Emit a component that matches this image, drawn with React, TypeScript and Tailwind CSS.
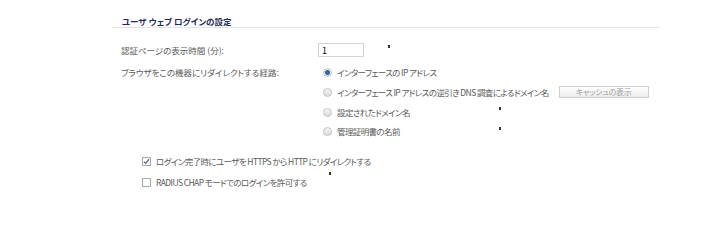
import React from 'react';

const Radio: React.FC<{ checked?: boolean }> = ({ checked }) => (
    <span className="flex items-center justify-center w-[9px] h-[9px] rounded-full border border-[#c4c4c4] bg-gradient-to-b from-[#f4f4f4] to-[#dcdcdc] shrink-0">
        {checked && <span className="w-[5px] h-[5px] rounded-full bg-[#2f6db5] border border-[#1d4f8c]" />}
    </span>
);

const Checkbox: React.FC<{ checked?: boolean }> = ({ checked }) => (
    <span className="flex items-center justify-center w-[9px] h-[9px] border border-[#a9a9a9] bg-white shrink-0">
        {checked && (
            <svg viewBox="0 0 8 8" className="w-[7px] h-[7px]">
                <path d="M1 4.2 L3 6.2 L7 1.2" fill="none" stroke="#4a5a8a" strokeWidth="1.3" />
            </svg>
        )}
    </span>
);

// tiny dark marks that sit over the form
const Mark: React.FC<{ className: string }> = ({ className }) => (
    <span className={`absolute w-[2px] h-[3px] bg-[#333] ${className}`} />
);

const RadioOption: React.FC<{ checked?: boolean; label: string; children?: React.ReactNode; className?: string }> = ({ checked, label, children, className }) => (
    <div className={`flex items-center h-[14px] gap-[5px] ${className ?? ''}`}>
        <Radio checked={checked} />
        <span className="whitespace-nowrap tracking-[-0.6px]">{label}</span>
        {children}
    </div>
);

export default function App() {
    return (
        <div
            className="relative w-[707px] h-[212px] bg-white text-[8.5px] text-[#5a5a5a] overflow-hidden [font-feature-settings:'palt']"
            style={{ fontFamily: '"Noto Sans CJK JP", "Liberation Sans", sans-serif' }}
        >
            <div className="ml-[112px] w-[548px] pt-[15px]">
                <div className="pl-[10px] h-[13px] leading-[12px] font-bold text-[#1f2b5c] border-b border-[#e4e4e4]">
                    ユーザ ウェブ ログインの設定
                </div>

                <div className="pl-[9px] mt-[15px] flex items-center h-[14px]">
                    <span className="w-[197px] shrink-0 whitespace-nowrap">認証ページの表示時間 (分):</span>
                    <input
                        readOnly
                        value="1"
                        className="w-[46px] h-[14px] border border-[#d4d4d4] px-[3px] text-[9px] text-black outline-none"
                    />
                </div>

                <div className="pl-[9px] mt-[8px] flex">
                    <span className="w-[202px] shrink-0 h-[14px] leading-[14px] whitespace-nowrap">ブラウザをこの機器にリダイレクトする経路:</span>
                    <div className="flex flex-col">
                        <RadioOption checked label="インターフェースの IP アドレス" />
                        <RadioOption className="mt-[6px]" label="インターフェース IP アドレスの逆引き DNS 調査によるドメイン名">
                            <button className="ml-[5px] w-[90px] h-[12px] border border-[#cfcfcf] bg-gradient-to-b from-white to-[#ececec] text-[#a0a0a0] text-[8px] leading-[10px] tracking-[-0.3px]">
                                キャッシュの表示
                            </button>
                        </RadioOption>
                        <RadioOption className="mt-[6px]" label="設定されたドメイン名" />
                        <RadioOption className="mt-[5px]" label="管理証明書の名前" />
                    </div>
                </div>

                <div className="pl-[30px] mt-[16px] flex flex-col tracking-[-0.6px]">
                    <div className="flex items-center h-[14px] gap-[5px]">
                        <Checkbox checked />
                        <span className="whitespace-nowrap">ログイン完了時にユーザを HTTPS から HTTP にリダイレクトする</span>
                    </div>
                    <div className="flex items-center h-[14px] gap-[5px] mt-[7px]">
                        <Checkbox />
                        <span className="whitespace-nowrap">RADIUS CHAP モードでのログインを許可する</span>
                    </div>
                </div>
            </div>

            <Mark className="left-[388px] top-[45px]" />
            <Mark className="left-[499px] top-[107px]" />
            <Mark className="left-[499px] top-[127px]" />
            <Mark className="left-[329px] top-[172px]" />
        </div>
    );
}
